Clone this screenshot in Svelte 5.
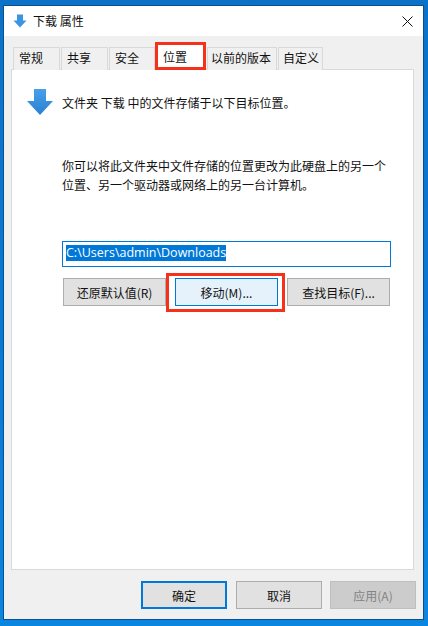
<script lang="ts">
  const tabs = [
    { label: "常规", width: 47, pad: 5 },
    { label: "共享", width: 47, pad: 5 },
    { label: "安全", width: 46, pad: 5 },
    { label: "位置", width: 51, pad: 7, active: true },
    { label: "以前的版本", width: 70, pad: 3 },
    { label: "自定义", width: 45, pad: 4 },
  ];
</script>

<div class="frame">
  <div class="dialog">
    <header class="titlebar">
      <svg class="title-icon" viewBox="0 0 14 14" width="14" height="14">
        <path d="M4 0.5h6v6h3.5L7 13.5 0.5 6.5H4z" fill="#3d94e0" />
      </svg>
      <span class="title">下载 属性</span>
      <svg class="close" viewBox="0 0 11 11" width="11" height="11">
        <path d="M0.5 0.5l10 10M10.5 0.5l-10 10" stroke="#111" stroke-width="1" fill="none" />
      </svg>
    </header>

    <div class="body">
      <div class="tabs">
        {#each tabs as tab}
          <div class="tab" class:active={tab.active} style="width: {tab.width}px; padding-left: {tab.pad}px">{tab.label}</div>
        {/each}
      </div>

      <section class="panel">
        <div class="intro">
          <svg viewBox="0 0 28 28" width="28" height="28">
            <defs>
              <linearGradient id="arrow" x1="0" y1="0" x2="0" y2="1">
                <stop offset="0" stop-color="#45a0ea" />
                <stop offset="1" stop-color="#2a80d2" />
              </linearGradient>
            </defs>
            <path d="M8 1h12v12h7L14 27 1 13h7z" fill="url(#arrow)" />
          </svg>
          <span>文件夹 下载 中的文件存储于以下目标位置。</span>
        </div>

        <p class="desc">你可以将此文件夹中文件存储的位置更改为此硬盘上的另一个<br />位置、另一个驱动器或网络上的另一台计算机。</p>

        <div class="path"><span class="selected">C:\Users\admin\Downloads</span></div>

        <div class="actions">
          <button class="btn wide">还原默认值(R)</button>
          <button class="btn wide move">移动(M)...</button>
          <button class="btn wide">查找目标(F)...</button>
        </div>
      </section>

      <footer class="footer">
        <button class="btn primary">确定</button>
        <button class="btn">取消</button>
        <button class="btn disabled">应用(A)</button>
      </footer>
    </div>

    <div class="mark mark-tab"></div>
    <div class="mark mark-move"></div>
  </div>
</div>

<style>
  :global(body) {
    margin: 0;
    background: #0a78d2;
  }
  .frame {
    width: 428px;
    height: 626px;
    box-sizing: border-box;
    padding: 5px 4px 6px 3px;
    background: linear-gradient(180deg, #0c72c8 0%, #0a7ad6 60%, #0b86e0 100%);
    font-family: "Noto Sans CJK SC", "Noto Sans", sans-serif;
    font-size: 12px;
    color: #111;
  }
  .dialog {
    position: relative;
    height: 100%;
    box-sizing: border-box;
    border: 1px solid #0a4f8e;
    background: #f0f0f0;
    display: flex;
    flex-direction: column;
  }
  .titlebar {
    height: 30px;
    flex: none;
    background: #fff;
    display: flex;
    align-items: center;
    padding: 0 10px 0 9px;
    gap: 6px;
  }
  .title {
    flex: 1;
    line-height: 18px;
  }
  .body {
    flex: 1;
    display: flex;
    flex-direction: column;
    padding: 11px 7px 10px 7px;
    min-height: 0;
  }
  .tabs {
    display: flex;
    height: 22px;
    padding-left: 2px;
    gap: 1px;
    flex: none;
    position: relative;
    z-index: 1;
  }
  .tab {
    box-sizing: border-box;
    height: 23px;
    border: 1px solid #d9d9d9;
    border-bottom: none;
    background: #f0f0f0;
    line-height: 20px;
    flex: none;
  }
  .tab.active {
    background: #fff;
    height: 26px;
    margin-top: -3px;
    margin-left: -1px;
    line-height: 24px;
    border-color: transparent;
  }
  .panel {
    width: 403px;
    height: 501px;
    box-sizing: border-box;
    flex: none;
    background: #fff;
    border: 1px solid #d9d9d9;
    padding: 18px 0 0 14px;
  }
  .intro {
    display: flex;
    align-items: center;
    gap: 8px;
    height: 28px;
  }
  .desc {
    margin: 40px 0 0 36px;
    line-height: 19px;
  }
  .path {
    margin: 47px 0 0 36px;
    width: 329px;
    height: 26px;
    box-sizing: border-box;
    border: 1px solid #0078d7;
    padding: 3px;
    line-height: 16px;
    font-family: "Open Sans", "Noto Sans", sans-serif;
    font-size: 12.5px;
  }
  .selected {
    display: inline-block;
    background: #0078d7;
    color: #fff;
  }
  .actions {
    display: flex;
    gap: 9px;
    margin: 11px 0 0 37px;
  }
  .btn {
    box-sizing: border-box;
    width: 86px;
    height: 28px;
    padding: 0;
    border: 1px solid #adadad;
    background: #e1e1e1;
    font: inherit;
    color: #111;
  }
  .wide {
    width: 103px;
  }
  .move {
    background: #e5f1fb;
    border-color: #0078d7;
  }
  .footer {
    display: flex;
    justify-content: flex-end;
    gap: 8px;
    margin-top: 11px;
  }
  .primary {
    border: 2px solid #0078d7;
    margin-right: 1px;
  }
  .disabled {
    background: #cccccc;
    border-color: #bfbfbf;
    color: #838383;
  }
  .mark {
    position: absolute;
    box-sizing: border-box;
    border: 3px solid #f5311c;
    pointer-events: none;
    z-index: 2;
  }
  .mark-tab {
    left: 151px;
    top: 36px;
    width: 51px;
    height: 28px;
  }
  .mark-move {
    left: 162px;
    top: 267px;
    width: 119px;
    height: 39px;
  }
</style>
